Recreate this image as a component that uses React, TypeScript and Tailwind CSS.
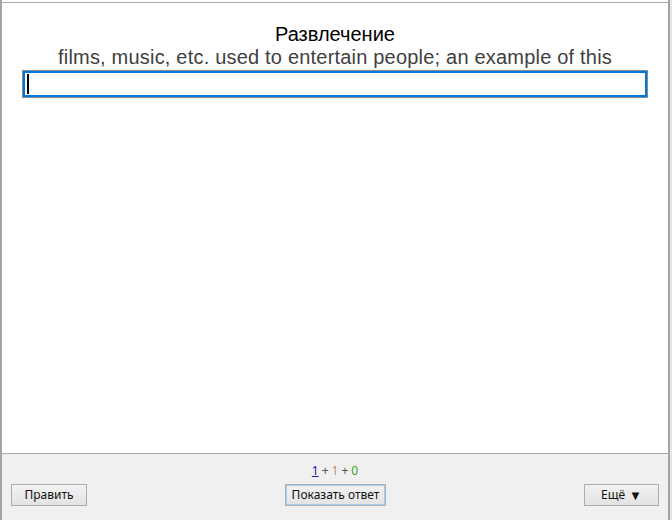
import React from 'react';

const btn =
  'h-[22px] border border-[#adadad] bg-gradient-to-b from-[#f2f2f2] to-[#e3e3e3] text-[12px] text-[#111] flex items-center justify-center';

const App = () => {
  return (
    <div className="flex h-[520px] w-[672px] bg-[#f0f0f0] font-['Liberation_Sans',sans-serif]">
      <div className="flex h-full w-[670px] flex-col border-l-2 border-r-2 border-[#a3a3a3]">
        <div className="h-[2px] bg-white" />
        {/* card area */}
        <div className="flex flex-1 flex-col items-center border-t border-[#a8a8a8] bg-white pt-[20px]">
          <div className="text-[20px] leading-[23px] text-black">Развлечение</div>
          <div className="text-[20px] leading-[23px] tracking-[0.2px] text-[#404040]">
            films, music, etc. used to entertain people; an example of this
          </div>
          <div className="mt-[1px] flex h-[28px] w-[626px] items-center border border-[#8a8a8a] p-0">
            <div className="flex h-full w-full items-center border-2 border-[#0078d7] pl-[2px]">
              <div className="h-[20px] w-[2px] bg-black" />
            </div>
          </div>
        </div>
        {/* bottom bar */}
        <div className="h-[67px] border-t border-[#a8a8a8] bg-[#f0f0f0] px-[9px] pt-[9px] font-['Noto_Sans',sans-serif]">
          <div className="flex justify-center gap-[3px] text-[12px] leading-[15px]">
            <span className="text-[#1a1aa6] underline">1</span>
            <span className="text-[#555]">+</span>
            <span className="text-[#c08a6a]">1</span>
            <span className="text-[#555]">+</span>
            <span className="text-[#3aa52a]">0</span>
          </div>
          <div className="mt-[6px] flex items-center justify-between">
            <button className={`${btn} w-[76px]`}>Править</button>
            <button className={`${btn} w-[101px] border-[#3c8ad8] shadow-[inset_0_0_0_1px_#a8d0f5]`}>
              Показать ответ
            </button>
            <button className={`${btn} w-[75px] gap-[4px]`}>
              Ещё<span className="text-[13px] leading-none">▼</span>
            </button>
          </div>
        </div>
      </div>
      <div className="h-full w-[2px] bg-[#e6e6e6]" />
    </div>
  );
};

export default App;
